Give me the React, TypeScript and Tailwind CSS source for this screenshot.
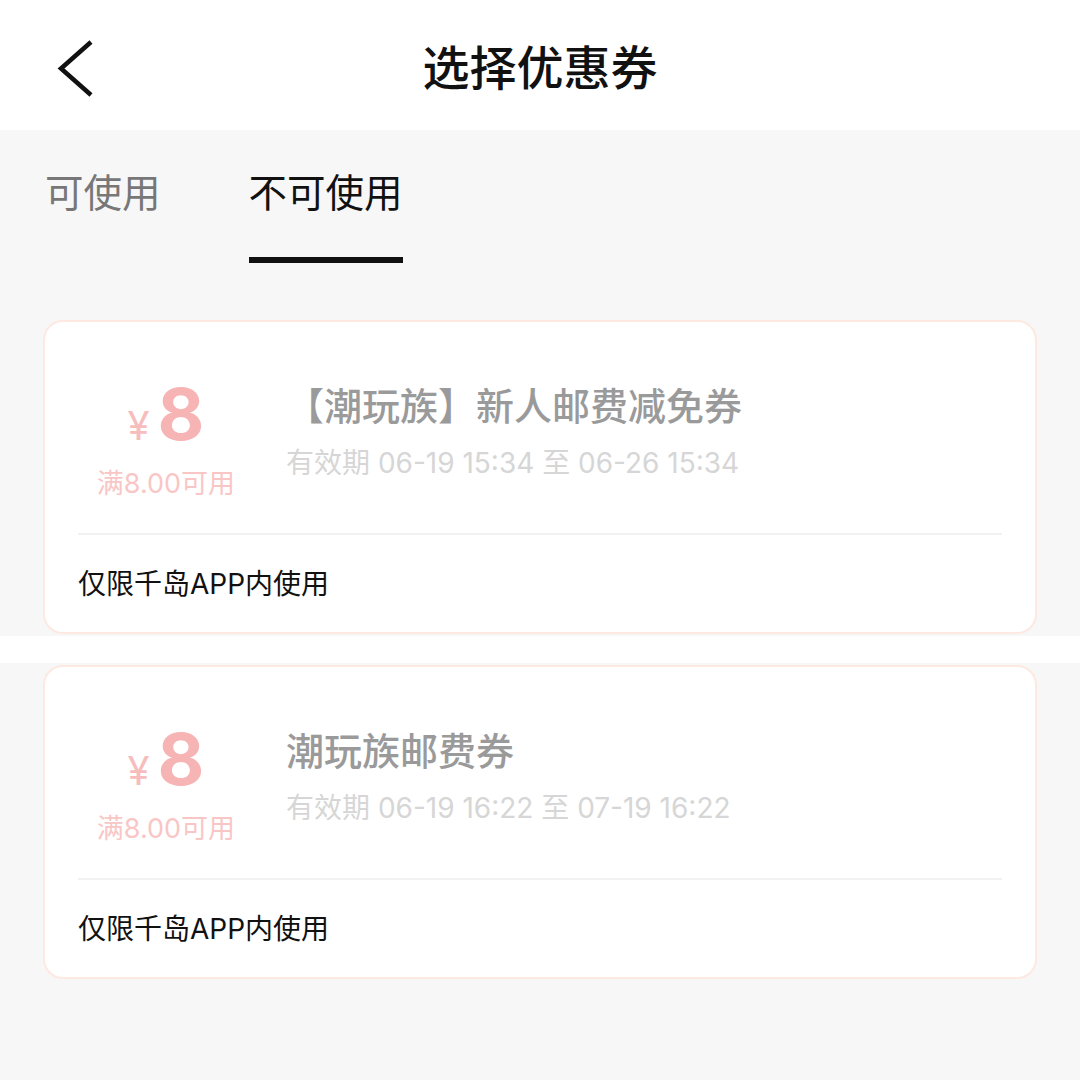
import React, { useState } from 'react'

interface Coupon {
  id: number
  amount: number
  threshold: string
  title: string
  validity: string
  scope: string
}

const coupons: Coupon[] = [
  {
    id: 1,
    amount: 8,
    threshold: '满8.00可用',
    title: '【潮玩族】新人邮费减免券',
    validity: '有效期 06-19 15:34 至 06-26 15:34',
    scope: '仅限千岛APP内使用',
  },
  {
    id: 2,
    amount: 8,
    threshold: '满8.00可用',
    title: '潮玩族邮费券',
    validity: '有效期 06-19 16:22 至 07-19 16:22',
    scope: '仅限千岛APP内使用',
  },
]

const BackIcon = () => (
  <svg width="40" height="62" viewBox="0 0 40 62" fill="none">
    <polyline points="35,5 5,31.5 35,58" stroke="#111" strokeWidth="4.5" strokeLinejoin="miter" />
  </svg>
)

const CouponCard: React.FC<{ coupon: Coupon }> = ({ coupon }) => (
  <div className="rounded-[20px] border-2 border-[#fde9e1] bg-white">
    <div className="mx-[33px] flex h-[211px] items-start pt-[56px]">
      {/* amount column */}
      <div className="flex w-[176px] flex-col items-center">
        <div className="flex items-baseline">
          <span className="text-[40px] leading-none text-[#f7bdbd]">¥</span>
          <span className="ml-[8px] text-[72px] font-bold leading-none text-[#f7b4b4]">{coupon.amount}</span>
        </div>
        <div className="mt-[16px] text-[27px] leading-[36px] text-[#f9c6c6]">{coupon.threshold}</div>
      </div>
      {/* title + validity */}
      <div className="ml-[32px] mt-[4px] flex flex-col">
        <div className="text-[38px] font-medium leading-[48px] text-[#9a9a9a]">{coupon.title}</div>
        <div className="mt-[15px] text-[28px] leading-[36px] text-[#d6d6d6]">{coupon.validity}</div>
      </div>
    </div>
    <div className="mx-[33px] h-[2px] bg-[#f1f1f1]" />
    <div className="mx-[33px] flex h-[97px] items-center text-[28px] text-[#111]">{coupon.scope}</div>
  </div>
)

export default function App() {
  const [tab, setTab] = useState(1)
  const tabs = ['可使用', '不可使用']

  return (
    <div
      className="flex min-h-[1080px] flex-col bg-white"
      style={{ fontFamily: 'Inter, "Noto Sans CJK SC", sans-serif' }}
    >
      {/* nav bar */}
      <header className="grid h-[130px] grid-cols-[1fr_auto_1fr] items-center bg-white pt-[5px]">
        <div className="pl-[56px]">
          <BackIcon />
        </div>
        <h1 className="text-[47px] font-medium leading-[60px] text-[#111]">选择优惠券</h1>
        <div />
      </header>

      {/* tabs */}
      <div className="flex gap-[88px] bg-[#f7f7f7] pl-[45px] pt-[39px]">
        {tabs.map((t, i) => (
          <button key={t} onClick={() => setTab(i)} className="flex flex-col items-stretch">
            <span className={`text-[38.5px] leading-[48px] ${tab === i ? 'text-[#111]' : 'text-[#777]'}`}>{t}</span>
            <span className={`mt-[40px] h-[6px] ${tab === i ? 'bg-[#111]' : 'bg-transparent'}`} />
          </button>
        ))}
      </div>

      {/* coupon list */}
      <div className="bg-[#f7f7f7] px-[43px] pb-[2px] pt-[57px]">
        <CouponCard coupon={coupons[0]} />
      </div>
      <div className="mt-[27px] flex-1 bg-[#f7f7f7] px-[43px] pt-[2px]">
        <CouponCard coupon={coupons[1]} />
      </div>
    </div>
  )
}
